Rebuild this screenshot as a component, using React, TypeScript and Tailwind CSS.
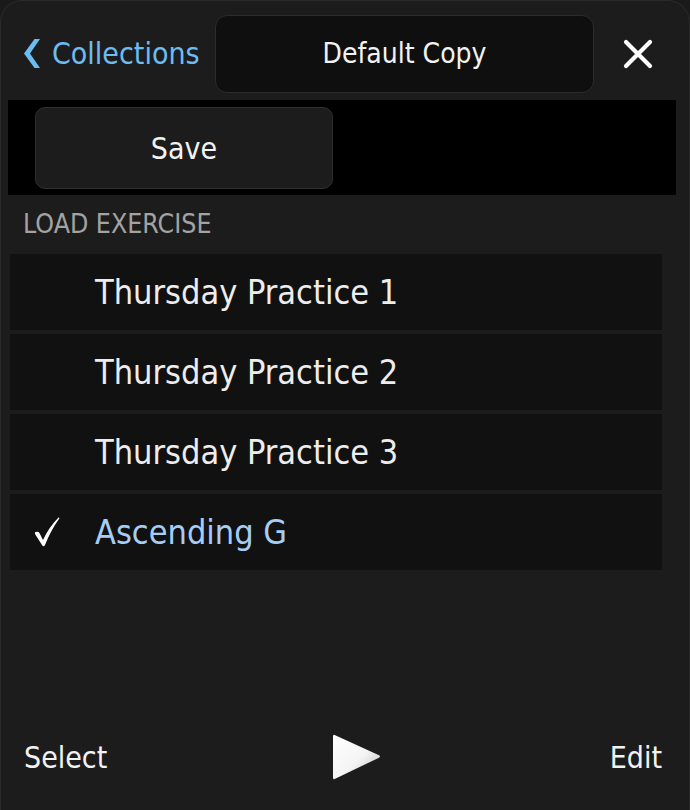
import React from "react";

const rows = [
  { name: "Thursday Practice 1", checked: false },
  { name: "Thursday Practice 2", checked: false },
  { name: "Thursday Practice 3", checked: false },
  { name: "Ascending G", checked: true },
];

export default function App() {
  return (
    <div className="w-[690px] h-[810px] bg-[#1a1a1a]">
      <div
        className="w-[690px] h-[810px] bg-[#1c1c1c] rounded-t-[22px] border border-b-0 border-[#2a2a2a] flex flex-col text-[#f2f2f2] font-stretch-condensed"
        style={{ fontFamily: '"DejaVu Sans Condensed", "DejaVu Sans", Verdana, sans-serif' }}
      >
        {/* Header */}
        <div className="h-[99px] flex items-start pt-[14px] pl-[21px]">
          <div className="h-[77px] flex items-center w-[193px] text-[#6cbcf2] text-[30px]">
            <svg width="20" height="32" viewBox="0 0 20 32" className="mr-[10px] shrink-0">
              <path d="M12.5 1 L18 1 L8 15.5 L18 30 L12.5 30 L2 15.5 Z" fill="#6cbcf2" />
            </svg>
            <span>Collections</span>
          </div>
          <div className="w-[379px] h-[78px] rounded-[12px] bg-[#0f0f0f] border border-[#2c2c2c] flex items-center justify-center text-[28px]">
            Default Copy
          </div>
          <div className="flex-1 h-[78px] flex items-center justify-center pr-[8px]">
            <svg width="30" height="30" viewBox="0 0 30 30">
              <path d="M3 3 L27 27 M27 3 L3 27" stroke="#ffffff" strokeWidth="4.2" strokeLinecap="round" />
            </svg>
          </div>
        </div>

        {/* Black band with Save */}
        <div className="ml-[7px] w-[668px] h-[95px] bg-black pt-[7px] pl-[27px]">
          <div className="w-[298px] h-[82px] rounded-[10px] bg-[#1c1c1c] border border-[#2e2e2e] flex items-center justify-center text-[30px]">
            Save
          </div>
        </div>

        {/* Label */}
        <div className="h-[59px] pl-[22px] flex items-center text-[26.5px] text-[#a3a3a3] pb-[2px]">
          LOAD EXERCISE
        </div>

        {/* Rows */}
        <div className="ml-[9px] w-[652px] flex flex-col gap-[4px]">
          {rows.map((r) => (
            <div key={r.name} className="h-[76px] bg-[#111111] flex items-center">
              <div className="w-[85px] pl-[22px] flex items-center">
                {r.checked ? (
                  <svg width="30" height="32" viewBox="0 0 30 32">
                    <path
                      d="M3.5 16 Q6 15 7.5 17 L11 24 Q17 11 26.5 1.5 Q28 1 27 3 Q19 14 13 29 Q11.5 31.5 10 29 L3 18 Q2.5 16.5 3.5 16 Z"
                      fill="#ffffff"
                    />
                  </svg>
                ) : null}
              </div>
              <span className={"text-[34px] " + (r.checked ? "text-[#a6cdf6]" : "text-[#ededed]")}>{r.name}</span>
            </div>
          ))}
        </div>

        <div className="flex-1" />

        {/* Bottom bar */}
        <div className="h-[104px] flex items-center pl-[23px] pr-[27px] pb-[2px] text-[30px]">
          <span>Select</span>
          <div className="flex-1 flex justify-center">
            <svg width="50" height="48" viewBox="0 0 50 48" className="ml-[-4px]">
              <defs>
                <linearGradient id="pg" x1="0" y1="0" x2="1" y2="1">
                  <stop offset="0" stopColor="#ffffff" />
                  <stop offset="0.55" stopColor="#f4f4f4" />
                  <stop offset="1" stopColor="#bdbdbd" />
                </linearGradient>
              </defs>
              <path
                d="M1 3.5 Q1 1 3.2 2.2 L47 22.3 Q49 23.5 47 24.7 L3.2 45.8 Q1 47 1 44.5 Z"
                fill="url(#pg)"
              />
            </svg>
          </div>
          <span>Edit</span>
        </div>
      </div>
    </div>
  );
}
